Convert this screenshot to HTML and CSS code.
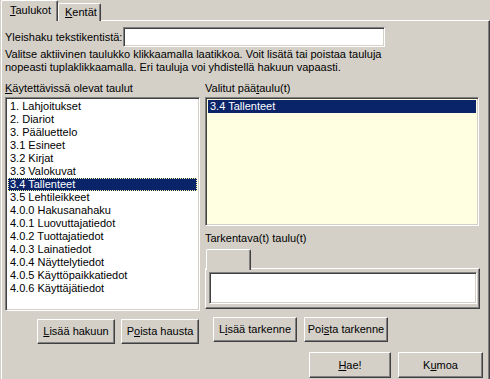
FILE: index.html
```html
<!DOCTYPE html>
<html lang="fi">
<head>
    <meta charset="UTF-8">
    <title>Haku</title>
    <link rel="stylesheet" href="styles.css">
</head>
<body>
    <div class="tabs">
        <div class="tab active"><u>T</u>aulukot</div>
        <div class="tab"><u>K</u>entät</div>
    </div>
    <div class="panel">
        <div class="search-row">
            <label class="search-label">Yleishaku tekstikentistä:</label>
            <div class="field search-field"></div>
        </div>
        <p class="hint">Valitse aktiivinen taulukko klikkaamalla laatikkoa. Voit lisätä tai poistaa tauluja<br>nopeasti tuplaklikkaamalla. Eri tauluja voi yhdistellä hakuun vapaasti.</p>

        <div class="columns">
            <div class="col col-left">
                <div class="label"><u>K</u>äytettävissä olevat taulut</div>
                <ul class="field listbox available">
                    <li>1. Lahjoitukset</li>
                    <li>2. Diariot</li>
                    <li>3. Pääluettelo</li>
                    <li>3.1 Esineet</li>
                    <li>3.2 Kirjat</li>
                    <li>3.3 Valokuvat</li>
                    <li class="selected focused">3.4 Tallenteet</li>
                    <li>3.5 Lehtileikkeet</li>
                    <li>4.0.0 Hakusanahaku</li>
                    <li>4.0.1 Luovuttajatiedot</li>
                    <li>4.0.2 Tuottajatiedot</li>
                    <li>4.0.3 Lainatiedot</li>
                    <li>4.0.4 Näyttelytiedot</li>
                    <li>4.0.5 Käyttöpaikkatiedot</li>
                    <li>4.0.6 Käyttäjätiedot</li>
                </ul>
                <div class="btn-row btn-row-left">
                    <button class="btn btn-small"><u>L</u>isää hakuun</button>
                    <button class="btn btn-small">P<u>o</u>ista hausta</button>
                </div>
            </div>

            <div class="col col-right">
                <div class="label">Valitut pää<u>t</u>aulu(t)</div>
                <ul class="field listbox chosen">
                    <li class="selected">3.4 Tallenteet</li>
                </ul>
                <div class="label refine-label">Tarkentava(t) taulu(t)</div>
                <div class="subtabs">
                    <div class="subtab"></div>
                </div>
                <div class="subpanel">
                    <div class="field refine-field"></div>
                </div>
                <div class="btn-row btn-row-right">
                    <button class="btn btn-wide">L<u>i</u>sää tarkenne</button>
                    <button class="btn btn-wide">Poi<u>s</u>ta tarkenne</button>
                </div>
            </div>
        </div>

        <div class="footer">
            <button class="btn btn-main"><u>H</u>ae!</button>
            <button class="btn btn-main">K<u>u</u>moa</button>
        </div>
    </div>
</body>
</html>
```

FILE: styles.css
```css
* { box-sizing: border-box; margin: 0; padding: 0; }
body { width: 490px; height: 379px; overflow: hidden; background: #d4d0c8; color: #000; font: 11px/13px "Liberation Sans", Arial, sans-serif; }
u { text-decoration: underline; text-underline-offset: 1px; }

/* tabs */
.tabs { display: flex; align-items: flex-end; height: 21px; margin-bottom: -1px; padding-left: 1px; }
.tab { height: 18px; padding: 2px 0 0 6px; background: #d4d0c8; border-top: 1px solid #fff; border-left: 1px solid #fff; border-right: 1px solid #404040; box-shadow: inset -1px 0 #808080; border-radius: 2px 2px 0 0; }
.tab:not(.active) { width: 43px; }
.tab.active { position: relative; z-index: 1; width: 57px; height: 21px; padding: 3px 0 0 8px; }

.panel { width: 489px; height: 359px; margin-left: 1px; padding: 6px 0 0 3px; border-top: 1px solid #fff; border-left: 1px solid #fff; border-right: 1px solid #404040; box-shadow: inset -1px 0 #808080; }

/* sunken controls */
.field { background: #fff; border: 1px solid; border-color: #808080 #fff #fff #808080; box-shadow: inset 1px 1px #404040, inset -1px -1px #d4d0c8; }

.search-row { display: flex; align-items: center; height: 20px; }
.search-label { width: 118px; }
.search-field { width: 262px; height: 20px; }

.hint { margin-top: 1px; }

.columns { display: flex; gap: 5px; margin-top: 8px; }
.col-left { width: 195px; }
.col-right { width: 274px; }
.label { height: 15px; }

.listbox { list-style: none; padding: 2px; overflow: hidden; }
.listbox li { height: 13px; padding-left: 2px; white-space: nowrap; }
.listbox li.selected { background: #0a246a; color: #fff; }
.listbox li.focused { outline: 1px dotted #ffff9f; outline-offset: -1px; }
.available { height: 214px; }
.chosen { height: 129px; background: #ffffe1; }

.refine-label { margin-top: 6px; height: 13px; }
.subtabs { display: flex; margin-top: 4px; height: 20px; margin-bottom: -1px; padding-left: 1px; }
.subtab { position: relative; z-index: 1; width: 45px; height: 21px; background: #d4d0c8; border-top: 1px solid #fff; border-left: 1px solid #fff; border-right: 1px solid #404040; box-shadow: inset -1px 0 #808080; border-radius: 2px 2px 0 0; }
.subpanel { width: 275px; height: 41px; padding: 3px 2px 3px 3px; border: 1px solid; border-color: #fff #404040 #404040 #fff; box-shadow: inset -1px -1px #808080; }
.refine-field { height: 32px; }

/* buttons */
.btn-row { display: flex; gap: 6px; }
.btn-row-left { justify-content: flex-end; margin-top: 8px; padding-right: 1px; }
.btn-row-right { margin-top: 8px; padding-left: 8px; gap: 7px; }
.btn { height: 25px; font: inherit; color: #000; background: #d4d0c8; border: 1px solid; border-color: #fff #404040 #404040 #fff; box-shadow: inset -1px -1px #808080; }
.btn-small { width: 78px; }
.btn-wide { width: 84px; }
.btn-main { height: 26px; }
.btn-main:first-child { width: 82px; }
.btn-main:last-child { width: 85px; }

.footer { display: flex; justify-content: flex-end; gap: 7px; margin-top: 8px; padding-right: 6px; }
```
